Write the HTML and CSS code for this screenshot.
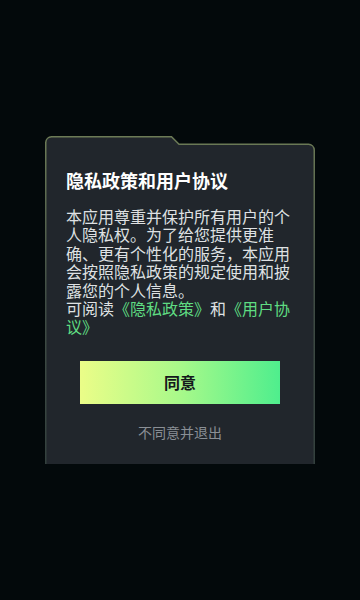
FILE: index.html
```html
<!DOCTYPE html>
<html lang="zh-CN">
<head>
    <meta charset="UTF-8">
    <meta name="viewport" content="width=device-width, initial-scale=1.0">
    <title>隐私政策和用户协议</title>
    <link rel="stylesheet" href="styles.css">
</head>
<body>
    <div class="dialog">
        <svg class="dialog-bg" width="270" height="328" viewBox="0 0 270 328">
            <defs>
                <linearGradient id="edge" x1="0" y1="0" x2="0" y2="1">
                    <stop offset="0" stop-color="#6c7b56"/>
                    <stop offset="0.5" stop-color="#3f4c44"/>
                    <stop offset="1" stop-color="#33403d"/>
                </linearGradient>
            </defs>
            <path d="M0.75 328 V6.5 A6 6 0 0 1 6.5 0.75 H126.5 L134 8.25 H263.5 A6 6 0 0 1 269.25 14 V328"
                  fill="#21262c" stroke="url(#edge)" stroke-width="1.5"/>
        </svg>

        <div class="dialog-body">
            <h1 class="dialog-title">隐私政策和用户协议</h1>
            <p class="dialog-text">
                本应用尊重并保护所有用户的个人隐私权。为了给您提供更准确、更有个性化的服务，本应用会按照隐私政策的规定使用和披露您的个人信息。<br>可阅读<a class="link" href="#">《隐私政策》</a>和<a class="link" href="#">《用户协议》</a>
            </p>
            <button class="btn-agree">同意</button>
            <div class="btn-exit">不同意并退出</div>
        </div>
    </div>
</body>
</html>
```

FILE: styles.css
```css
body {
    margin: 0;
    background: #03090b;
    font-family: "Noto Sans CJK SC", "Noto Sans", sans-serif;
    color: #e2e4e6;
}

.dialog {
    position: relative;
    width: 270px;
    height: 328px;
    margin: 136px 0 0 45px;
}

.dialog-bg {
    position: absolute;
    left: 0;
    top: 0;
}

.dialog-body {
    position: relative;
    padding: 32px 21px 0;
}

.dialog-title {
    margin: 0;
    font-size: 18px;
    line-height: 24px;
    font-weight: bold;
    color: #fff;
}

.dialog-text {
    margin: 15px 0 0;
    font-size: 16px;
    line-height: 18.4px;
    color: #dfe1e3;
}

.link {
    color: #5fdc82;
    text-decoration: none;
}

.btn-agree {
    display: block;
    width: 200px;
    height: 43px;
    margin: 25px 0 0 14px;
    border: none;
    border-radius: 0;
    background: linear-gradient(90deg, #ebfd88, #a8f98a 50%, #4fee8d);
    color: #15191c;
    font-family: inherit;
    font-size: 16px;
    font-weight: bold;
    cursor: pointer;
}

.btn-exit {
    margin-top: 18px;
    text-align: center;
    font-size: 14px;
    line-height: 20px;
    color: #8a8f95;
}
```
